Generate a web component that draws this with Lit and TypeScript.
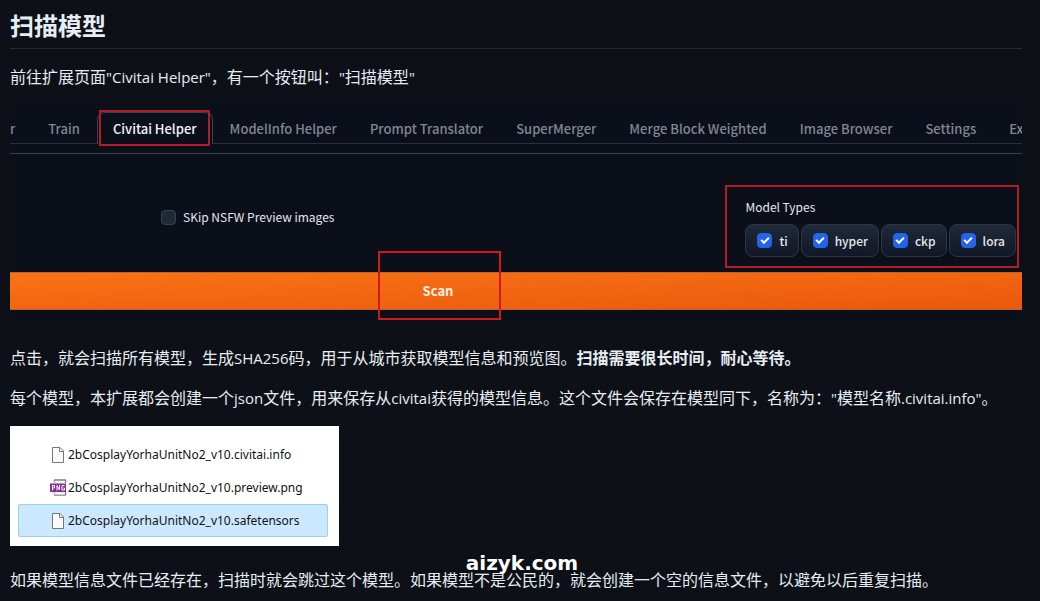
import { LitElement, html, svg, css, nothing } from "lit";
import { customElement, property } from "lit/decorators.js";

interface TabItem {
  label: string;
  active?: boolean;
}

interface FileItem {
  name: string;
  kind: "page" | "png";
  selected?: boolean;
}

const TABS: TabItem[] = [
  { label: "r" },
  { label: "Train" },
  { label: "Civitai Helper", active: true },
  { label: "ModelInfo Helper" },
  { label: "Prompt Translator" },
  { label: "SuperMerger" },
  { label: "Merge Block Weighted" },
  { label: "Image Browser" },
  { label: "Settings" },
  { label: "Ex" },
];

const MODEL_TYPES = ["ti", "hyper", "ckp", "lora"];

const FILES: FileItem[] = [
  { name: "2bCosplayYorhaUnitNo2_v10.civitai.info", kind: "page" },
  { name: "2bCosplayYorhaUnitNo2_v10.preview.png", kind: "png" },
  { name: "2bCosplayYorhaUnitNo2_v10.safetensors", kind: "page", selected: true },
];

@customElement("scan-panel")
export class ScanPanel extends LitElement {
  static styles = css`
    :host {
      display: block;
      background: #0b0f19;
      font-family: "Noto Sans CJK SC", "Open Sans", sans-serif;
      font-size: 13px;
      line-height: 20px;
      color: #e5e7eb;
      padding-bottom: 14px;
    }
    .tabs {
      display: flex;
      gap: 1px;
      overflow-x: clip;
      overflow-y: visible;
      padding-top: 7px;
      box-shadow: inset 0 -1px 0 #2b303b;
    }
    .tab {
      flex: none;
      box-sizing: border-box;
      height: 32px;
      padding: 0 15px;
      border: 1px solid transparent;
      border-bottom: 0;
      border-radius: 8px 8px 0 0;
      background: none;
      font: inherit;
      font-weight: 500;
      color: #7f8794;
      cursor: pointer;
      position: relative;
    }
    .tab:first-child {
      padding-left: 0;
      border-left: 0;
    }
    .tab.active {
      border-color: #374151;
      background: #0b0f19;
      color: #f3f4f6;
    }
    .mark {
      position: absolute;
      border: 2px solid #b11d22;
      pointer-events: none;
    }
    .tab .mark {
      inset: -3px 2px -2px 1px;
    }
    .body {
      display: flex;
      justify-content: space-between;
      align-items: flex-start;
      margin-top: 9px;
      border-top: 1px solid #374151;
      padding: 31px 3px 4px 151px;
      font-size: 12px;
    }
    .skip {
      display: flex;
      align-items: center;
      gap: 7px;
      margin-top: 22px;
    }
    .types {
      position: relative;
      margin: 0;
      border: 0;
      padding: 12px 3px 11px 20px;
      min-width: 0;
    }
    .types .mark {
      inset: 0;
    }
    .legend {
      display: block;
      margin-bottom: 7px;
    }
    .options {
      display: flex;
      gap: 2px;
    }
    .option {
      box-sizing: border-box;
      height: 33px;
      display: flex;
      align-items: center;
      gap: 7px;
      padding: 0 10px 0 11px;
      border: 1px solid #2b3544;
      border-radius: 8px;
      background: linear-gradient(to bottom, #1f2937, #111827);
      font-weight: 500;
    }
    .box {
      appearance: none;
      box-sizing: border-box;
      width: 15px;
      height: 15px;
      margin: 0;
      border: 1px solid #374151;
      border-radius: 4px;
      background: #1f2937;
      display: grid;
      place-items: center;
    }
    .box:checked {
      border-color: #2563eb;
      background: #2563eb;
    }
    .box:checked::after {
      content: "";
      width: 6px;
      height: 3px;
      border-left: 2px solid #fff;
      border-bottom: 2px solid #fff;
      transform: translateY(-1px) rotate(-45deg);
    }
    .scan {
      display: block;
      box-sizing: border-box;
      width: 100%;
      height: 38px;
      border: 0;
      border-top: 1px solid #c2612a;
      border-bottom: 1px solid #c2612a;
      padding: 0 156px 0 0;
      background: linear-gradient(to bottom right, #f97316, #ea580c);
      color: #fff1e4;
      font: inherit;
      font-weight: 700;
      cursor: pointer;
    }
    .target {
      position: relative;
      display: inline-block;
    }
    .target .mark {
      inset: -30px -48px -19px -45px;
      border-color: #d01a1a;
    }
  `;

  render() {
    return html`
      <div class="tabs" role="tablist">
        ${TABS.map(
          (t) => html`<button
            class="tab ${t.active ? "active" : ""}"
            role="tab"
            aria-selected=${t.active ? "true" : "false"}
          >${t.label}${t.active ? html`<span class="mark"></span>` : nothing}</button>`
        )}
      </div>
      <div class="body">
        <label class="skip"><input class="box" type="checkbox" />SKip NSFW Preview images</label>
        <div class="types" role="group" aria-labelledby="types-label">
          <span class="legend" id="types-label">Model Types</span>
          <div class="options">
            ${MODEL_TYPES.map(
              (m) => html`<label class="option"><input class="box" type="checkbox" checked />${m}</label>`
            )}
          </div>
          <span class="mark"></span>
        </div>
      </div>
      <button class="scan"><span class="target">Scan<span class="mark"></span></span></button>
    `;
  }
}

@customElement("file-list")
export class FileList extends LitElement {
  @property({ attribute: false }) files: FileItem[] = [];

  static styles = css`
    :host {
      display: block;
    }
    .files {
      box-sizing: border-box;
      width: fit-content;
      min-width: 329px;
      margin: 0;
      padding: 12px 11px 9px 8px;
      list-style: none;
      background: #fff;
      color: #111;
      font-family: "Noto Sans", "Open Sans", sans-serif;
      font-size: 12px;
    }
    .file {
      box-sizing: border-box;
      height: 33px;
      display: flex;
      align-items: center;
      gap: 1px;
      padding-left: 31px;
      border: 1px solid transparent;
      border-radius: 2px;
    }
    .file.selected {
      background: #cce8ff;
      border-color: #99d1ee;
    }
    .icon {
      flex: none;
      width: 17px;
      height: 17px;
    }
  `;

  private icon(kind: FileItem["kind"]) {
    if (kind === "page") {
      return svg`<path d="M2.5 1.5H10L13.5 5V16.500H2.500Z" fill="#fafafa" stroke="#777"/><path d="M9.500 1.500V5.500H13.500" fill="none" stroke="#777"/>`;
    }
    return svg`<path d="M4.500 1V4M15.500 1V4M4 1H16M4.500 13V16M15.500 13V16M4 16H16" fill="none" stroke="#857a8a" stroke-width="1.500"/><path d="M4 2H15V16H4Z" fill="#eee" opacity=".6"/><path d="M0 4.500H16V13H0Z" fill="#8c2c96"/><path d="M2.500 11.500V6.500H4.500V9H2.500M7 11.500V6.500L9.500 11V6M14.500 6.500H12V11H14.500V9H13.500" fill="none" stroke="#fff" stroke-width="1"/>`;
  }

  render() {
    return html`<ul class="files">
      ${this.files.map(
        (f) => html`<li class="file ${f.selected ? "selected" : ""}">
          <svg class="icon" viewBox="0 0 17 17" aria-hidden="true">${this.icon(f.kind)}</svg>
          <span>${f.name}</span>
        </li>`
      )}
    </ul>`;
  }
}

@customElement("app-root")
export class AppRoot extends LitElement {
  static styles = css`
    :host {
      display: block;
      position: relative;
      box-sizing: border-box;
      min-height: 100vh;
      padding: 11px 18px 8px 10px;
      background: #0d1117;
      color: #e6edf3;
      font-family: "Open Sans", "Noto Sans CJK SC", sans-serif;
      font-size: 16px;
      line-height: 24px;
    }
    .title {
      margin: 0 0 16px;
      padding-bottom: 7px;
      border-bottom: 1px solid #252a32;
      font-size: 24px;
      line-height: 30px;
      font-weight: 700;
    }
    .text {
      margin: 0 0 16px;
    }
    .text:last-of-type {
      margin-bottom: 0;
    }
    .latin {
      font-size: 15px;
    }
    .figure {
      margin-bottom: 22px;
    }
    .watermark {
      position: absolute;
      left: 4px;
      right: 0;
      bottom: 26px;
      text-align: center;
      font-family: "DejaVu Sans", sans-serif;
      font-size: 20px;
      font-weight: 700;
      color: #fff;
      pointer-events: none;
    }
  `;

  render() {
    return html`
      <h2 class="title">扫描模型</h2>
      <p class="text">前往扩展页面<span class="latin">"Civitai Helper"</span>，有一个按钮叫：<span class="latin">"</span>扫描模型<span class="latin">"</span></p>
      <scan-panel class="figure"></scan-panel>
      <p class="text">点击，就会扫描所有模型，生成<span class="latin">SHA256</span>码，用于从城市获取模型信息和预览图。<strong>扫描需要很长时间，耐心等待。</strong></p>
      <p class="text">每个模型，本扩展都会创建一个<span class="latin">json</span>文件，用来保存从<span class="latin">civitai</span>获得的模型信息。这个文件会保存在模型同下，名称为：<span class="latin">"</span>模型名称<span class="latin">.civitai.info"</span>。</p>
      <file-list class="figure" .files=${FILES}></file-list>
      <p class="text">如果模型信息文件已经存在，扫描时就会跳过这个模型。如果模型不是公民的，就会创建一个空的信息文件，以避免以后重复扫描。</p>
      <div class="watermark">aizyk.com</div>
    `;
  }
}
